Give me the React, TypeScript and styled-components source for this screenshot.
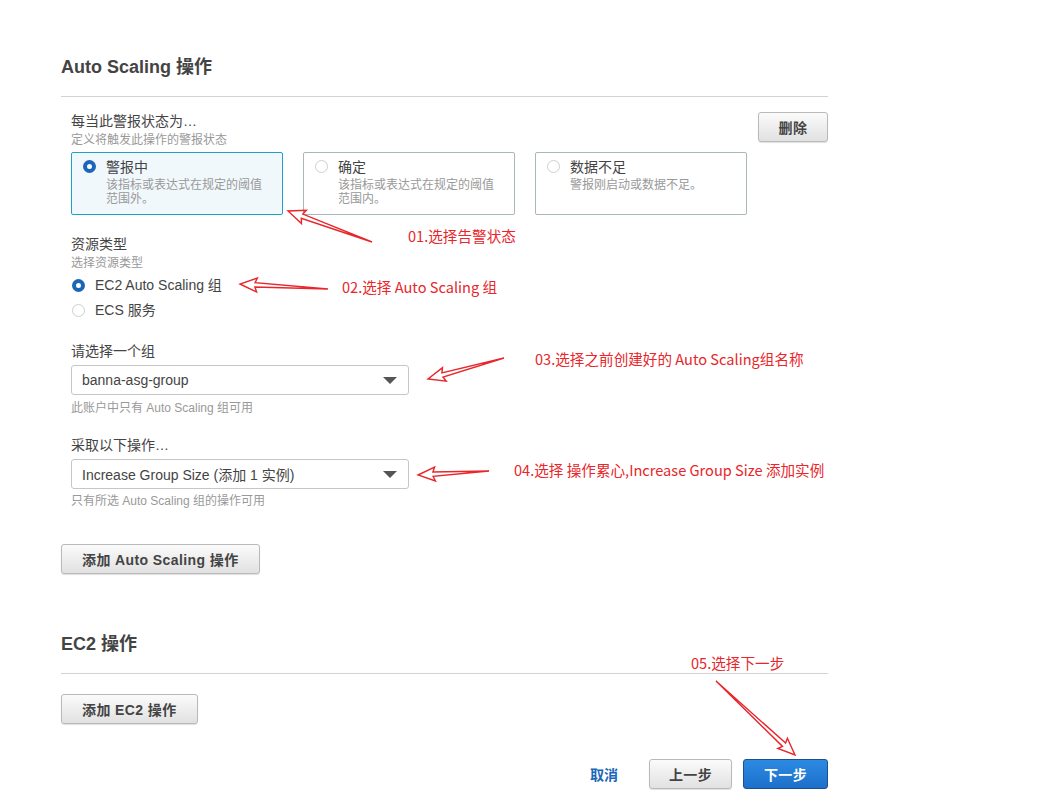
import React from "react";
import styled, { createGlobalStyle } from "styled-components";

const Global = createGlobalStyle`
  html, body { margin: 0; padding: 0; background: #fff; }
  body {
    font-family: "Liberation Sans", "Noto Sans CJK SC", sans-serif;
    color: #444;
  }
  * { box-sizing: border-box; }
`;

const Page = styled.div`
  position: relative;
  width: 1055px;
  height: 801px;
  overflow: hidden;
  background: #fff;
`;

const Content = styled.div`
  margin-left: 61px;
  width: 767px;
  padding-top: 56px;
  display: flex;
  flex-direction: column;
`;

const SectionTitle = styled.h2<{ $top?: number }>`
  margin: ${(p) => p.$top ?? 0}px 0 0 0;
  font-size: 18px;
  line-height: 22px;
  font-weight: bold;
  color: #444;
`;

const Rule = styled.div`
  margin-top: 18px;
  height: 1px;
  background: #d3d3d3;
`;

const ActionBlock = styled.div`
  margin-top: 15px;
  padding-left: 10px;
  display: flex;
  flex-direction: column;
`;

const HeaderRow = styled.div`
  display: flex;
  justify-content: space-between;
  align-items: flex-start;
`;

const Label = styled.div<{ $top?: number }>`
  margin-top: ${(p) => p.$top ?? 0}px;
  font-size: 14px;
  line-height: 18px;
  color: #444;
`;

const Hint = styled.div<{ $top?: number }>`
  margin-top: ${(p) => p.$top ?? 0}px;
  font-size: 12px;
  line-height: 16px;
  color: #999;
`;

const Cards = styled.div`
  margin-top: 4px;
  display: flex;
  gap: 20px;
`;

const Card = styled.div<{ $on?: boolean }>`
  width: 212px;
  height: 63px;
  border: 1px solid ${(p) => (p.$on ? "#1ea0c8" : "#aab7b8")};
  background: ${(p) => (p.$on ? "#f1f8fc" : "#fff")};
  border-radius: 2px;
  padding: 5px 8px 0 11px;
  display: grid;
  grid-template-columns: 12px 1fr;
  column-gap: 11px;
`;

const Radio = styled.span<{ $on?: boolean }>`
  display: inline-block;
  width: 13px;
  height: 13px;
  border-radius: 50%;
  background: #fff;
  border: ${(p) => (p.$on ? "4px solid #1a67b9" : "1px solid #cfcfcf")};
  margin-top: 2px;
  flex: none;
`;

const CardBody = styled.div`
  display: flex;
  flex-direction: column;
`;

const CardTitle = styled.div`
  font-size: 14px;
  line-height: 18px;
  color: #444;
`;

const CardDesc = styled.div`
  margin-top: 2px;
  font-size: 12px;
  line-height: 14px;
  color: #999;
`;

const GrayButton = styled.button<{ $w?: number }>`
  height: 30px;
  width: ${(p) => (p.$w ? `${p.$w}px` : "auto")};
  padding: ${(p) => (p.$w ? "0" : "0 20px")};
  border: 1px solid #b9b9b9;
  border-radius: 3px;
  background: linear-gradient(#fbfbfb, #e1e1e1);
  box-shadow: 0 1px 1px rgba(0, 0, 0, 0.12);
  font-family: "Liberation Sans", "Noto Sans CJK SC", sans-serif;
  font-size: 14px;
  font-weight: bold;
  letter-spacing: 0.4px;
  white-space: nowrap;
  color: #444;
  display: inline-flex;
  align-items: center;
  justify-content: center;
  cursor: pointer;
`;

const RadioList = styled.div`
  margin-top: 5px;
  display: flex;
  flex-direction: column;
  gap: 7px;
`;

const RadioRow = styled.label`
  display: flex;
  align-items: center;
  gap: 10px;
  padding-left: 1px;
  font-size: 14px;
  line-height: 18px;
  color: #444;
  & > span { margin-top: 0; }
`;

const Select = styled.div`
  margin-top: 5px;
  width: 338px;
  height: 30px;
  border: 1px solid #c6c6c6;
  border-radius: 3px;
  background: #fff;
  display: flex;
  align-items: center;
  justify-content: space-between;
  padding: 0 11px 0 10px;
  font-size: 14px;
  color: #444;
`;

const Caret = styled.span`
  width: 0;
  height: 0;
  border-left: 7px solid transparent;
  border-right: 7px solid transparent;
  border-top: 7px solid #555;
`;

const ButtonRow = styled.div<{ $top: number }>`
  margin-top: ${(p) => p.$top}px;
  display: flex;
`;

const Footer = styled.div`
  margin-top: 35px;
  display: flex;
  justify-content: flex-end;
  align-items: center;
`;

const LinkButton = styled.a`
  font-size: 14px;
  font-weight: bold;
  color: #1a67b9;
  text-decoration: none;
  margin-right: 31px;
`;

const PrimaryButton = styled.button`
  height: 30px;
  width: 85px;
  margin-left: 11px;
  padding: 0;
  border: 1px solid #1b4f8d;
  border-radius: 3px;
  background: linear-gradient(#2c8ae2, #1c70ca);
  font-family: "Liberation Sans", "Noto Sans CJK SC", sans-serif;
  font-size: 14px;
  font-weight: bold;
  color: #fff;
  letter-spacing: 0.4px;
  white-space: nowrap;
`;

const Note = styled.span<{ $x: number; $y: number }>`
  position: absolute;
  left: ${(p) => p.$x}px;
  top: ${(p) => p.$y}px;
  font-family: "Noto Sans CJK SC", sans-serif;
  font-size: 14.6px;
  line-height: 18px;
  color: #e8262b;
  white-space: nowrap;
`;

const Overlay = styled.svg`
  position: absolute;
  left: 0;
  top: 0;
  pointer-events: none;
`;

function arrowPoints(x1: number, y1: number, x2: number, y2: number): string {
  const h = 15;
  const w = 2.2;
  const W = 7;
  const dx = x2 - x1;
  const dy = y2 - y1;
  const L = Math.hypot(dx, dy);
  const ux = dx / L;
  const uy = dy / L;
  const px = -uy;
  const py = ux;
  const bx = x2 - ux * h;
  const by = y2 - uy * h;
  const sx = x2 - ux * (h + 2);
  const sy = y2 - uy * (h + 2);
  const pts: [number, number][] = [
    [x1, y1],
    [bx + px * w, by + py * w],
    [sx + px * W, sy + py * W],
    [x2, y2],
    [sx - px * W, sy - py * W],
    [bx - px * w, by - py * w],
  ];
  return pts.map(([a, b]) => `${a.toFixed(1)},${b.toFixed(1)}`).join(" ");
}

const arrows: [number, number, number, number][] = [
  [372, 242, 288, 211],
  [328, 289, 240, 284],
  [504, 358, 428, 379],
  [489, 471, 418, 475],
  [716, 681, 795, 755],
];

export default function App() {
  return (
    <Page>
      <Global />
      <Content>
        <SectionTitle>Auto Scaling 操作</SectionTitle>
        <Rule />
        <ActionBlock>
          <HeaderRow>
            <div>
              <Label>每当此警报状态为…</Label>
              <Hint $top={2}>定义将触发此操作的警报状态</Hint>
            </div>
            <GrayButton $w={70}>删除</GrayButton>
          </HeaderRow>
          <Cards>
            <Card $on>
              <Radio $on />
              <CardBody>
                <CardTitle>警报中</CardTitle>
                <CardDesc>
                  该指标或表达式在规定的阈值
                  <br />
                  范围外。
                </CardDesc>
              </CardBody>
            </Card>
            <Card>
              <Radio />
              <CardBody>
                <CardTitle>确定</CardTitle>
                <CardDesc>
                  该指标或表达式在规定的阈值
                  <br />
                  范围内。
                </CardDesc>
              </CardBody>
            </Card>
            <Card>
              <Radio />
              <CardBody>
                <CardTitle>数据不足</CardTitle>
                <CardDesc>警报刚启动或数据不足。</CardDesc>
              </CardBody>
            </Card>
          </Cards>

          <Label $top={20}>资源类型</Label>
          <Hint $top={2}>选择资源类型</Hint>
          <RadioList>
            <RadioRow>
              <Radio $on />
              EC2 Auto Scaling 组
            </RadioRow>
            <RadioRow>
              <Radio />
              ECS 服务
            </RadioRow>
          </RadioList>

          <Label $top={23}>请选择一个组</Label>
          <Select>
            banna-asg-group
            <Caret />
          </Select>
          <Hint $top={5}>此账户中只有 Auto Scaling 组可用</Hint>

          <Label $top={20}>采取以下操作…</Label>
          <Select>
            Increase Group Size (添加 1 实例)
            <Caret />
          </Select>
          <Hint $top={4}>只有所选 Auto Scaling 组的操作可用</Hint>
        </ActionBlock>

        <ButtonRow $top={35}>
          <GrayButton>添加 Auto Scaling 操作</GrayButton>
        </ButtonRow>

        <SectionTitle $top={59}>EC2 操作</SectionTitle>
        <Rule />
        <ButtonRow $top={20}>
          <GrayButton>添加 EC2 操作</GrayButton>
        </ButtonRow>

        <Footer>
          <LinkButton href="#">取消</LinkButton>
          <GrayButton $w={83}>上一步</GrayButton>
          <PrimaryButton>下一步</PrimaryButton>
        </Footer>
      </Content>

      <Overlay width={1055} height={801} viewBox="0 0 1055 801">
        {arrows.map((a, i) => (
          <polygon
            key={i}
            points={arrowPoints(a[0], a[1], a[2], a[3])}
            fill="none"
            stroke="#e8262b"
            strokeWidth={1.4}
            strokeLinejoin="miter"
          />
        ))}
      </Overlay>
      <Note $x={408} $y={227}>01.选择告警状态</Note>
      <Note $x={342} $y={278}>02.选择 Auto Scaling 组</Note>
      <Note $x={535} $y={350}>03.选择之前创建好的 Auto Scaling组名称</Note>
      <Note $x={514} $y={461}>04.选择 操作累心,Increase Group Size 添加实例</Note>
      <Note $x={691} $y={654}>05.选择下一步</Note>
    </Page>
  );
}
